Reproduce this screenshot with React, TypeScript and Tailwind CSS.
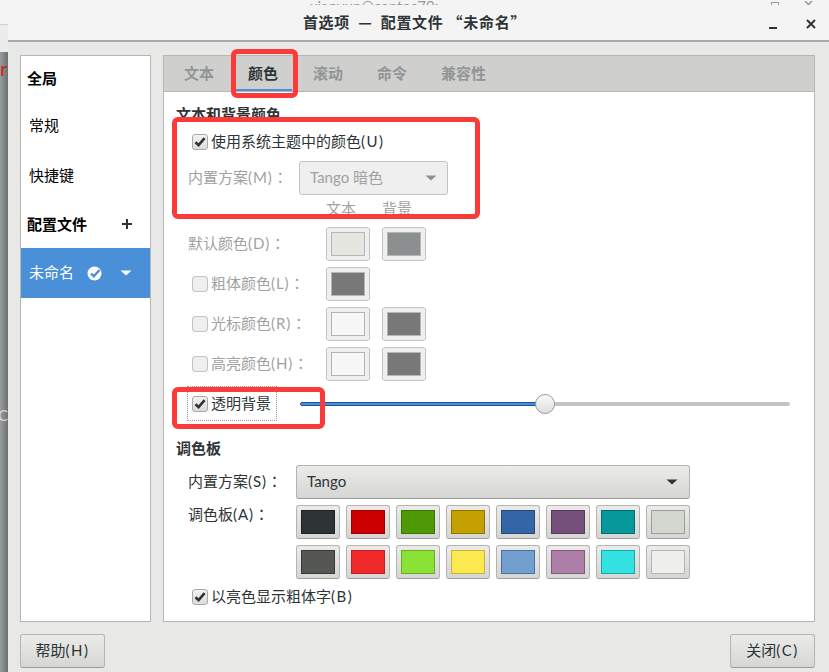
import React from "react";

const Check = () => (
  <svg width="14" height="14" viewBox="0 0 14 14" className="block">
    <path d="M2.5 7.2 L5.6 10.2 L11.6 3.2" fill="none" stroke="#2e3436" strokeWidth="2.6" />
  </svg>
);

function Box({ on, disabled }: { on?: boolean; disabled?: boolean }) {
  return (
    <span
      className={
        disabled
          ? "flex h-4 w-4 shrink-0 items-center justify-center rounded-[3px] border border-[#c4c4c2] bg-[#efefef]"
          : "flex h-4 w-4 shrink-0 items-center justify-center rounded-[3px] border border-[#a8a8a5] bg-gradient-to-b from-[#f2f2f1] to-[#dcdcda]"
      }
    >
      {on ? <Check /> : null}
    </span>
  );
}

function Swatch({ fill, edge, disabled }: { fill: string; edge?: string; disabled?: boolean }) {
  return (
    <div
      className={
        disabled
          ? "flex h-[34px] w-[44px] shrink-0 items-center justify-center rounded-[3px] border border-[#c4c4c2] bg-[#efefef]"
          : "flex h-[34px] w-[44px] shrink-0 items-center justify-center rounded-[3px] border border-[#b4b4b1] border-b-[#a0a09d] bg-gradient-to-b from-[#ebebea] to-[#d6d6d4]"
      }
    >
      <div className="h-[24px] w-[34px] border" style={{ backgroundColor: fill, borderColor: edge ?? "#b5b5b5" }} />
    </div>
  );
}

function Label({ cjk, mn, colon }: { cjk: string; mn: string; colon?: boolean }) {
  return (
    <span className="whitespace-nowrap pb-[2px]">
      {cjk}
      <span className={colon ? "tracking-[0.9px]" : "tracking-[1.5px]"}>{mn}</span>
      {colon ? <span className="font-['Noto_Sans_CJK_TC',sans-serif]">：</span> : null}
    </span>
  );
}

const row1: [string, string][] = [
  ["#2e3436", "#1d2122"],
  ["#cc0000", "#a00000"],
  ["#4e9a06", "#3a7404"],
  ["#c4a000", "#8f7500"],
  ["#3465a4", "#244a7a"],
  ["#75507b", "#57395c"],
  ["#06989a", "#046d6f"],
  ["#d3d7cf", "#9c9f99"],
];
const row2: [string, string][] = [
  ["#555753", "#3a3b38"],
  ["#ef2929", "#c41f1f"],
  ["#8ae234", "#68ab25"],
  ["#fce94f", "#c4b53a"],
  ["#729fcf", "#46719e"],
  ["#ad7fa8", "#7f5a7b"],
  ["#34e2e2", "#15a8a8"],
  ["#eeeeec", "#b4b4b2"],
];

function ColorRow({ box, cjk, mn, a, b }: { box?: boolean; cjk: string; mn: string; a: string; b?: string }) {
  return (
    <div className="flex h-[34px] items-center">
      <div className={box ? "flex w-[138px] items-center gap-[3px] pl-[4px] text-[#a0a2a2]" : "flex w-[138px] items-center text-[#a0a2a2]"}>
        {box ? <Box disabled /> : null}
        <Label cjk={cjk} mn={mn} colon />
      </div>
      <div className="flex gap-[12px]">
        <Swatch fill={a} disabled />
        {b ? <Swatch fill={b} disabled /> : null}
      </div>
    </div>
  );
}

export default function App() {
  return (
    <div className="relative h-[672px] w-[829px] overflow-hidden bg-[#f4f4f4] font-['Lato','Noto_Sans_CJK_SC',sans-serif] text-[15px] leading-[20px] text-[#2e3436]">
      {/* desktop behind the window */}
      <div className="absolute left-0 top-[24px] h-[28px] w-[8px] border-t border-[#d0d0d0] bg-[#ececec]" />
      <div className="absolute bottom-0 left-0 top-[52px] w-[8px] bg-gradient-to-r from-[#9a9da0] to-[#6c7073]" />
      <div className="absolute left-0 top-[58px] text-[20px] text-[#cc2222]">r</div>
      <div className="absolute left-[-2px] top-[405px] text-[#d8d8d8]">C</div>
      <div className="absolute left-[310px] top-0 h-[5px] overflow-hidden">
        <div className="mt-[-4px] whitespace-nowrap text-[#9a9a9a]">xianyun@centos79:~</div>
      </div>
      <div className="absolute left-[771px] top-[2px] h-[4px] w-[8px] border border-[#9a9a9a]" />
      <svg className="absolute left-[804px] top-[1px]" width="10" height="6" viewBox="0 0 10 6">
        <path d="M1 0 L8 7 M8 0 L1 7" stroke="#9a9a9a" strokeWidth="1.5" fill="none" />
      </svg>

      {/* window */}
      <div className="absolute bottom-0 left-[8px] right-0 top-[5px] flex flex-col rounded-t-[7px] bg-[#e8e8e7]">
        <div className="relative flex h-[37px] shrink-0 items-center justify-center rounded-t-[7px] border-b-2 border-[#a9a9a7] bg-[#f4f4f4] pb-[2px] pr-[8px] font-['Noto_Sans_CJK_SC',sans-serif] font-bold tracking-[0.7px]">
          <span className="whitespace-pre">首选项  —  配置文件 “未命名”</span>
          <svg className="absolute right-[50px] top-[12px]" width="12" height="14" viewBox="0 0 12 14">
            <rect x="2" y="10" width="8" height="2" fill="#2e3436" />
          </svg>
          <svg className="absolute right-[12px] top-[12px]" width="12" height="14" viewBox="0 0 12 14">
            <path d="M2 3 L10 11 M10 3 L2 11" stroke="#2e3436" strokeWidth="2" fill="none" />
          </svg>
        </div>

        <div className="mt-[13px] flex h-[567px] shrink-0 gap-[12px] pl-[12px] pr-[14px]">
          {/* sidebar */}
          <div className="flex w-[131px] shrink-0 flex-col border border-[#b6b6b3] bg-white text-black">
            <div className="flex h-[44px] items-center pl-[6px] font-bold">全局</div>
            <div className="flex h-[52px] items-center pb-[2px] pl-[8px]">常规</div>
            <div className="flex h-[48px] items-center pb-[2px] pl-[8px]">快捷键</div>
            <div className="flex h-[48px] items-center justify-between pl-[6px] pr-[17px] font-bold">
              <span>配置文件</span>
              <svg width="12" height="12" viewBox="0 0 12 12">
                <path d="M6 1 V11 M1 6 H11" stroke="#2e3436" strokeWidth="2" fill="none" />
              </svg>
            </div>
            <div className="flex h-[50px] items-center bg-[#4a90d9] pl-[8px] text-white">
              <span className="pb-[2px]">未命名</span>
              <svg className="ml-[13px]" width="15" height="15" viewBox="0 0 15 15">
                <circle cx="7.5" cy="7.5" r="7" fill="#ffffff" />
                <path d="M4 7.5 L6.8 10.2 L12.5 4" stroke="#4a90d9" strokeWidth="2.4" fill="none" />
              </svg>
              <svg className="ml-[18px]" width="12" height="6" viewBox="0 0 12 6">
                <path d="M0.5 0.5 H11.5 L6 5.5 Z" fill="#ffffff" />
              </svg>
            </div>
          </div>

          {/* notebook */}
          <div className="flex flex-1 flex-col border border-[#b6b6b3] bg-white">
            <div className="flex h-[36px] shrink-0 border-b border-[#b6b6b3] bg-[#cfcfcd] pl-[3px] font-bold text-[#929595]">
              <div className="flex w-[64px] items-center justify-center pb-[2px]">文本</div>
              <div className="ml-[5px] mr-[4px] flex w-[56px] items-center justify-center border-b-[2px] border-[#4a90d9] pr-[2px] text-[#2e3436]">颜色</div>
              <div className="flex w-[64px] items-center justify-center pb-[2px]">滚动</div>
              <div className="flex w-[64px] items-center justify-center pb-[2px]">命令</div>
              <div className="flex w-[79px] items-center justify-center pb-[2px]">兼容性</div>
            </div>

            <div className="flex flex-col pl-[12px]">
              <div className="mt-[12px] h-[20px] font-bold">文本和背景颜色</div>

              <div className="mt-[8px] flex h-[20px] items-center gap-[3px] pl-[16px] text-[#2e3436]">
                <Box on />
                <Label cjk="使用系统主题中的颜色" mn="(U)" />
              </div>

              <div className="mt-[9px] flex h-[34px] items-center pl-[12px] text-[#a0a2a2]">
                <div className="w-[111px] pb-[2px]">
                  <Label cjk="内置方案" mn="(M)" colon />
                </div>
                <div className="flex h-[34px] w-[149px] items-center justify-between rounded-[3px] border border-[#c4c4c2] bg-[#efefef] pl-[10px] pr-[10px]">
                  <span className="pb-[2px]">Tango 暗色</span>
                  <svg width="12" height="6" viewBox="0 0 12 6">
                    <path d="M0.5 0.5 H11.5 L6 5.5 Z" fill="#8f9191" />
                  </svg>
                </div>
              </div>

              <div className="mt-[3px] flex h-[20px] gap-[26px] pl-[150px] text-[#a0a2a2]">
                <span>文本</span>
                <span>背景</span>
              </div>

              <div className="mt-[9px] flex flex-col gap-[6px] pl-[12px]">
                <ColorRow cjk="默认颜色" mn="(D)" a="#e5e6e0" b="#8c8f8f" />
                <ColorRow box cjk="粗体颜色" mn="(L)" a="#787878" />
                <ColorRow box cjk="光标颜色" mn="(R)" a="#f7f7f7" b="#787878" />
                <ColorRow box cjk="高亮颜色" mn="(H)" a="#f7f7f7" b="#787878" />
              </div>

              <div className="mt-[5px] flex h-[35px] items-center">
                <div className="ml-[11px] flex h-[35px] w-[90px] items-center gap-[3px] border border-dotted border-[#9a9a9a] pl-[4px]">
                  <Box on />
                  <span className="pb-[2px]">透明背景</span>
                </div>
                <div className="relative ml-[23px] flex h-[16px] w-[490px] items-center">
                  <div className="h-[4px] w-[245px] rounded-l-full border border-[#1c5294] bg-[#4a90d9]" />
                  <div className="h-[4px] flex-1 rounded-r-full bg-[#c4c4c1]" />
                  <div className="absolute left-[235px] top-[-2px] h-[20px] w-[20px] rounded-full border border-[#9a9a97] bg-gradient-to-b from-[#fafafa] to-[#dedede]" />
                </div>
              </div>

              <div className="mt-[17px] h-[20px] font-bold">调色板</div>

              <div className="mt-[7px] flex h-[34px] items-center pl-[12px]">
                <div className="w-[108px] pb-[2px]">
                  <Label cjk="内置方案" mn="(S)" colon />
                </div>
                <div className="flex h-[34px] w-[394px] items-center justify-between rounded-[3px] border border-[#b4b4b1] border-b-[#9a9a97] bg-gradient-to-b from-[#ebebea] to-[#d6d6d4] pl-[10px] pr-[11px]">
                  <span className="pb-[2px]">Tango</span>
                  <svg width="12" height="6" viewBox="0 0 12 6">
                    <path d="M0.5 0.5 H11.5 L6 5.5 Z" fill="#2e3436" />
                  </svg>
                </div>
              </div>

              <div className="mt-[6px] flex pl-[12px]">
                <div className="w-[108px] leading-[18px]">
                  <Label cjk="调色板" mn="(A)" colon />
                </div>
                <div className="flex flex-col gap-[6px]">
                  <div className="flex gap-[6px]">
                    {row1.map(([f, e]) => (
                      <Swatch key={f} fill={f} edge={e} />
                    ))}
                  </div>
                  <div className="flex gap-[6px]">
                    {row2.map(([f, e]) => (
                      <Swatch key={f} fill={f} edge={e} />
                    ))}
                  </div>
                </div>
              </div>

              <div className="mt-[8px] flex h-[20px] items-center gap-[3px] pl-[16px]">
                <Box on />
                <Label cjk="以亮色显示粗体字" mn="(B)" />
              </div>
            </div>
          </div>
        </div>

        <div className="mt-[12px] flex justify-between pl-[12px] pr-[14px]">
          <div className="flex h-[34px] w-[85px] items-center justify-center rounded-[3px] border border-[#b4b4b1] border-b-[#9a9a97] bg-gradient-to-b from-[#ebebea] to-[#d6d6d4]">
            <Label cjk="帮助" mn="(H)" />
          </div>
          <div className="flex h-[34px] w-[85px] items-center justify-center rounded-[3px] border border-[#b4b4b1] border-b-[#9a9a97] bg-gradient-to-b from-[#ebebea] to-[#d6d6d4]">
            <Label cjk="关闭" mn="(C)" />
          </div>
        </div>
      </div>

      {/* red annotation boxes */}
      <div className="absolute left-[231px] top-[49px] h-[49px] w-[67px] rounded-[6px] border-[5px] border-[#fb3a3a]" />
      <div className="absolute left-[172px] top-[117px] h-[102px] w-[308px] rounded-[6px] border-[5px] border-[#fb3a3a]" />
      <div className="absolute left-[172px] top-[387px] h-[42px] w-[153px] rounded-[6px] border-[5px] border-[#fb3a3a]" />
    </div>
  );
}
